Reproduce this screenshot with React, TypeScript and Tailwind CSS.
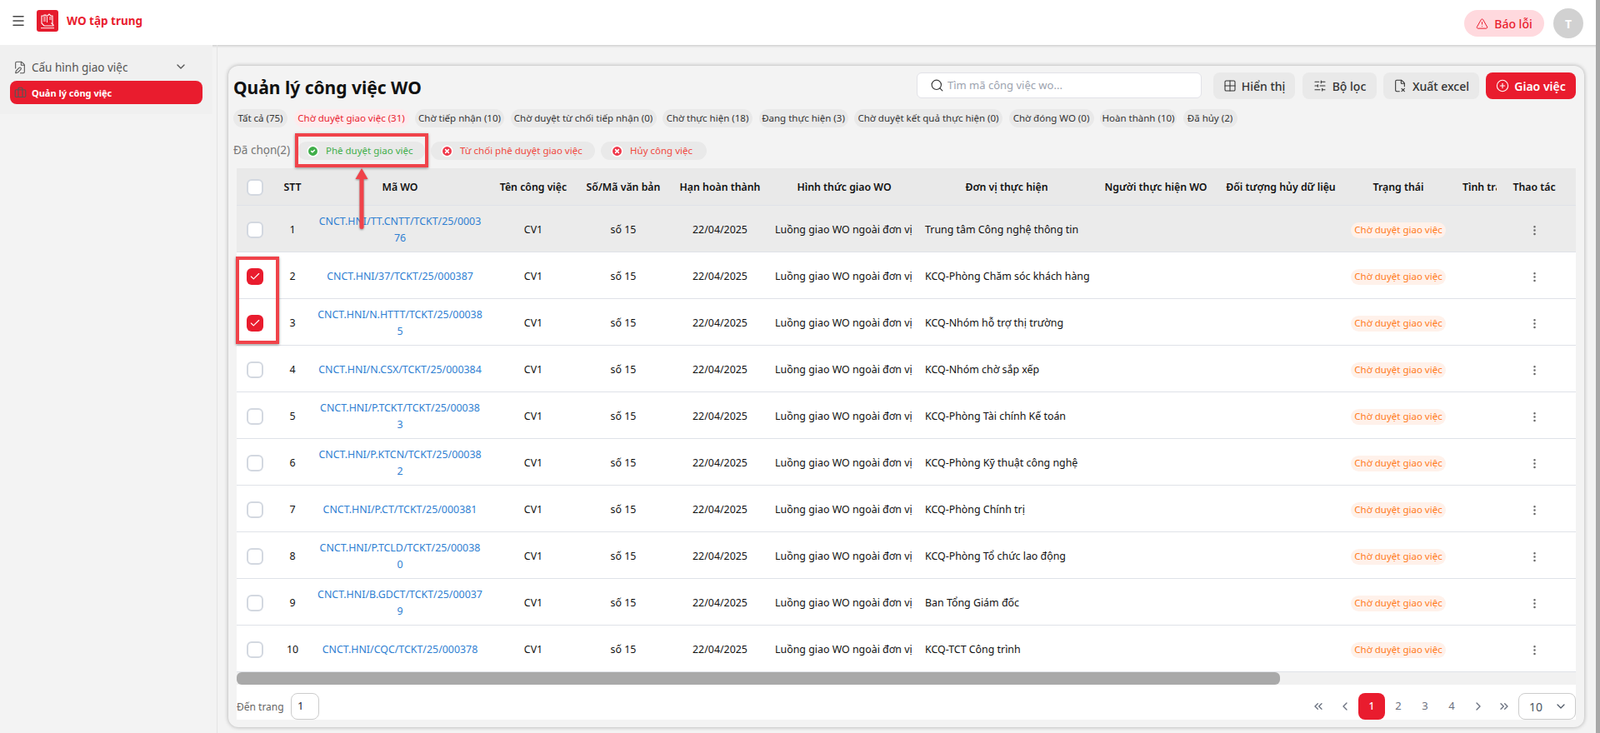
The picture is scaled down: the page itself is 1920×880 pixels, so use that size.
import { AlertTriangle, Briefcase, Check, ChevronDown, ChevronLeft, ChevronRight, ChevronsLeft, ChevronsRight, CircleCheck, CircleX, CirclePlus, EllipsisVertical, FileX2, FilePen, Grid2x2, Menu, Search, SlidersHorizontal } from "lucide-react";

const tabs: [string, string][] = [
  ["Tất cả (75)", "w-[65px]"], ["Chờ duyệt giao việc (31)", "w-[138px]"], ["Chờ tiếp nhận (10)", "w-[107px]"],
  ["Chờ duyệt từ chối tiếp nhận (0)", "w-[175px]"], ["Chờ thực hiện (18)", "w-[108px]"],
  ["Đang thực hiện (3)", "w-[107px]"], ["Chờ duyệt kết quả thực hiện (0)", "w-[178px]"], ["Chờ đóng WO (0)", "w-[102px]"],
  ["Hoàn thành (10)", "w-[92px]"], ["Đã hủy (2)", "w-[65px]"],
];

const rows: [string, string][] = [
  ["CNCT.HNI/TT.CNTT/TCKT/25/000376", "Trung tâm Công nghệ thông tin"],
  ["CNCT.HNI/37/TCKT/25/000387", "KCQ-Phòng Chăm sóc khách hàng"],
  ["CNCT.HNI/N.HTTT/TCKT/25/000385", "KCQ-Nhóm hỗ trợ thị trường"],
  ["CNCT.HNI/N.CSX/TCKT/25/000384", "KCQ-Nhóm chờ sắp xếp"],
  ["CNCT.HNI/P.TCKT/TCKT/25/000383", "KCQ-Phòng Tài chính Kế toán"],
  ["CNCT.HNI/P.KTCN/TCKT/25/000382", "KCQ-Phòng Kỹ thuật công nghệ"],
  ["CNCT.HNI/P.CT/TCKT/25/000381", "KCQ-Phòng Chính trị"],
  ["CNCT.HNI/P.TCLD/TCKT/25/000380", "KCQ-Phòng Tổ chức lao động"],
  ["CNCT.HNI/B.GDCT/TCKT/25/000379", "Ban Tổng Giám đốc"],
  ["CNCT.HNI/CQC/TCKT/25/000378", "KCQ-TCT Công trình"],
];

const gridCols = "grid grid-cols-[42px_48px_212px_108px_108px_124px_174px_206px_162px_138px_144px_46px_90px_5px]";

function Box({ checked }: { checked?: boolean }) {
  return checked ? (
    <span className="flex h-5 w-5 items-center justify-center rounded-md bg-[#e91c2e]">
      <Check size={14} strokeWidth={2} className="text-white" />
    </span>
  ) : (
    <span className="block h-5 w-5 rounded-md border-2 border-[#d3d8e0] bg-white" />
  );
}

export default function App() {
  return (
    <div className="relative h-[880px] w-[1920px] overflow-hidden bg-[#f3f3f3] font-['Inter',sans-serif] text-[12px] text-[#111]">
      <header className="absolute left-0 top-0 flex h-[54px] w-full items-center bg-white shadow-[0_1px_3px_rgba(0,0,0,0.2)]">
        <Menu size={18} strokeWidth={2} className="absolute left-[13px] top-[16px] text-[#444]" />
        <svg viewBox="0 0 26 26" className="absolute left-[44px] top-[12px] h-[26px] w-[26px]">
          <rect width="26" height="26" rx="3" fill="#e51b2d" />
          <path d="M6 7h3v-1h2v1h2l2-2 2 2h2v9h-1l2 2v1H9l-3-3z" fill="none" stroke="#fff" strokeWidth="1.1" />
          <path d="M8 9h3M8 11h3M8 13h3M15 9h3M15 11h3M12.5 8v7" stroke="#fff" strokeWidth="0.9" />
          <rect x="5" y="21" width="16" height="1.2" fill="#fff" opacity="0.8" />
        </svg>
        <span className="absolute left-[80px] top-[15px] text-[13.5px] font-bold leading-5 text-[#e91c2e]">WO tập trung</span>
        <div className="absolute left-[1757px] top-[12px] flex h-8 w-[96px] items-center justify-center gap-[7px] rounded-full bg-[#ffd9de] text-[14px] font-medium text-[#e91c2e]">
          <AlertTriangle size={15} strokeWidth={1.6} />
          <span>Báo lỗi</span>
        </div>
        <div className="absolute left-[1864px] top-[10px] flex h-9 w-9 items-center justify-center rounded-full bg-[#d1d1d1] text-[14px] font-bold text-white">T</div>
      </header>

      <div className="absolute bottom-0 right-0 top-0 z-20 w-[5px] bg-[#a8a8a8]" />

      <aside className="absolute left-0 top-[54px] h-[83px] w-[255px] bg-[#f0f0f0]">
        <FilePen size={16} strokeWidth={1.6} className="absolute left-[16px] top-[19px] text-[#555]" />
        <span className="absolute left-[38px] top-[17px] text-[13.5px] leading-5 text-[#555] [font-weight:450]">Cấu hình giao việc</span>
        <ChevronDown size={16} strokeWidth={2} className="absolute left-[209px] top-[18px] text-[#555]" />
        <div className="absolute left-[12px] top-[43px] flex h-7 w-[231px] items-center rounded-lg bg-[#e91c2e]">
          <Briefcase size={15} strokeWidth={1.8} className="absolute left-[5px] text-[#555]" />
          <span className="absolute left-[26px] top-[7px] text-[11px] font-bold leading-4 text-white">Quản lý công việc</span>
        </div>
      </aside>
      <div className="absolute bottom-0 left-[260px] top-[54px] w-px bg-[#e4e4e4]" />

      <main className="absolute left-[274px] top-[79px] h-[794px] w-[1627px] rounded-xl bg-[#f3f3f3] shadow-[0_0_5px_rgba(0,0,0,0.3)]">
        <h1 className="absolute left-[6px] top-[12px] text-[21px] font-bold leading-7 text-[#111]">Quản lý công việc WO</h1>

        <div className="absolute left-[826px] top-[8px] flex h-[31px] w-[342px] items-center rounded-md border border-[#e2e2e8] bg-white pl-[15px] text-[13px] text-[#9ca3af]">
          <Search size={17} strokeWidth={1.6} className="mr-[4px] text-[#333]" />
          <span>Tìm mã công việc wo...</span>
        </div>
        <div className="absolute left-[1182px] top-[8px] flex h-8 w-[98px] items-center justify-center gap-[6px] rounded-lg bg-[#e9e9e9] text-[14px] font-medium text-[#333]">
          <Grid2x2 size={16} strokeWidth={1.6} /><span>Hiển thị</span>
        </div>
        <div className="absolute left-[1289px] top-[8px] flex h-8 w-[89px] items-center justify-center gap-[7px] rounded-lg bg-[#e9e9e9] text-[14px] font-medium text-[#333]">
          <SlidersHorizontal size={16} strokeWidth={1.6} /><span>Bộ lọc</span>
        </div>
        <div className="absolute left-[1386px] top-[8px] flex h-8 w-[115px] items-center justify-center gap-[7px] rounded-lg bg-[#e9e9e9] text-[14px] font-medium text-[#333]">
          <FileX2 size={16} strokeWidth={1.6} /><span>Xuất excel</span>
        </div>
        <div className="absolute left-[1509px] top-[8px] flex h-8 w-[108px] items-center justify-center gap-[6px] rounded-lg bg-[#e91c2e] text-[14px] font-semibold text-white">
          <CirclePlus size={16} strokeWidth={1.6} /><span>Giao việc</span>
        </div>

        <div className="absolute left-[6px] top-[52px] flex gap-[7.5px]">
          {tabs.map(([t, w], i) => (
            <span key={t} className={`flex h-[22px] items-center justify-center whitespace-nowrap rounded-full text-[11.5px] ${w} ${i === 1 ? "bg-[#fdecee] text-[#e91c2e]" : "bg-[#e9e9e9] text-[#333]"}`}>{t}</span>
          ))}
        </div>

        <span className="absolute left-[6px] top-[91px] text-[13.5px] leading-5 text-[#777]">Đã chọn(2)</span>
        <div className="absolute left-[83px] top-[91px] flex h-[22px] w-[153px] items-center gap-[8px] rounded-full bg-[#e9e9e9] pl-[11px] text-[11.5px] text-[#3fae49]">
          <CircleCheck size={15} strokeWidth={2.5} className="fill-[#3fae49] text-white" /><span>Phê duyệt giao việc</span>
        </div>
        <div className="absolute left-[243px] top-[91px] flex h-[22px] w-[197px] items-center gap-[8px] rounded-full bg-[#e9e9e9] pl-[12px] text-[11.5px] text-[#f0483e]">
          <CircleX size={15} strokeWidth={2.5} className="fill-[#f0384a] text-white" /><span>Từ chối phê duyệt giao việc</span>
        </div>
        <div className="absolute left-[447px] top-[91px] flex h-[22px] w-[127px] items-center gap-[8px] rounded-full bg-[#e9e9e9] pl-[12px] text-[11.5px] text-[#f0483e]">
          <CircleX size={15} strokeWidth={2.5} className="fill-[#f0384a] text-white" /><span>Hủy công việc</span>
        </div>

        <div className="absolute left-[10px] top-[123px] w-[1607px]">
          <div className={`${gridCols} h-[45px] items-center border-b border-[#dfe2e8] bg-[#e9e9e9] pt-[2px] text-center text-[12.3px] font-semibold text-[#111]`}>
            <div className="flex justify-center pl-[2px]"><Box /></div>
            <div className="pl-[2px]">STT</div>
            <div>Mã WO</div>
            <div>Tên công việc</div>
            <div>Số/Mã văn bản</div>
            <div>Hạn hoàn thành</div>
            <div className="whitespace-nowrap">Hình thức giao WO</div>
            <div className="pl-[10px]">Đơn vị thực hiện</div>
            <div>Người thực hiện WO</div>
            <div className="whitespace-nowrap">Đối tượng hủy dữ liệu</div>
            <div>Trạng thái</div>
            <div className="overflow-hidden whitespace-nowrap pl-[5px] pr-[9px] text-left">Tình trạng</div>
            <div>Thao tác</div>
            <div />
          </div>
          {rows.map((r, i) => (
            <div key={r[0]} className={`${gridCols} h-[56px] items-center border-b border-[#dfe2e8] pt-[3px] text-center text-[12.4px] ${i === 0 ? "bg-[#ebebeb]" : "bg-white"}`}>
              <div className="flex justify-center pl-[2px]"><Box checked={i === 1 || i === 2} /></div>
              <div className="pl-[2px]">{i + 1}</div>
              <div className="break-all px-[7px] leading-5 text-[#2f80d2]">{r[0]}</div>
              <div>CV1</div>
              <div>số 15</div>
              <div>22/04/2025</div>
              <div className="whitespace-nowrap pl-[4px] text-left">Luồng giao WO ngoài đơn vị</div>
              <div className="whitespace-nowrap pl-[10px] text-left">{r[1]}</div>
              <div />
              <div />
              <div className="flex justify-center">
                <span className="flex h-[19px] w-[114px] items-center justify-center rounded-full bg-[#fff1ea] text-[11.5px] text-[#ff7a1a]">Chờ duyệt giao việc</span>
              </div>
              <div />
              <div className="flex justify-center"><EllipsisVertical size={15} className="text-[#666]" /></div>
              <div />
            </div>
          ))}
          <div className="h-[15px] bg-[#f1f1f1]">
            <div className="h-[15px] w-[1252px] rounded-md bg-[#a9a9a9]" />
          </div>
          <div className="relative h-[42px] bg-white">
            <span className="absolute left-0 top-[19px] text-[12px] leading-4 text-[#666]">Đến trang</span>
            <div className="absolute left-[65px] top-[10px] flex h-8 w-[34px] items-center rounded-lg border border-[#ccc] pl-[7px] text-[13px] text-[#1f2937]">1</div>
            <ChevronsLeft size={16} className="absolute left-[1290px] top-[18px] text-[#6b7280]" />
            <ChevronLeft size={16} className="absolute left-[1322px] top-[18px] text-[#6b7280]" />
            <span className="absolute left-[1346px] top-[10px] flex h-8 w-8 items-center justify-center rounded-lg bg-[#e91c2e] font-medium text-white">1</span>
            <span className="absolute left-[1378px] top-[10px] flex h-8 w-8 items-center justify-center text-[13px] text-[#6b7280]">2</span>
            <span className="absolute left-[1410px] top-[10px] flex h-8 w-8 items-center justify-center text-[13px] text-[#6b7280]">3</span>
            <span className="absolute left-[1442px] top-[10px] flex h-8 w-8 items-center justify-center text-[13px] text-[#6b7280]">4</span>
            <ChevronRight size={16} className="absolute left-[1482px] top-[18px] text-[#6b7280]" />
            <ChevronsRight size={16} className="absolute left-[1513px] top-[18px] text-[#6b7280]" />
            <div className="absolute left-[1538px] top-[10px] flex h-8 w-[69px] items-center justify-between rounded-lg border border-[#ccc] pl-[12px] pr-[9px] text-[14px] text-[#4b5563]">
              <span>10</span><ChevronDown size={16} strokeWidth={1.8} />
            </div>
          </div>
        </div>
      </main>

      <div className="absolute left-[354px] top-[160px] z-10 h-[41px] w-[160px] border-4 border-[#f0434a] shadow-[0_1px_3px_rgba(0,0,0,0.4)]" />
      <div className="absolute left-[283px] top-[308px] z-10 h-[105px] w-[52px] border-4 border-[#f0434a] shadow-[0_1px_3px_rgba(0,0,0,0.4)]" />
      <svg className="absolute left-[424px] top-[200px] z-10 h-[78px] w-[20px] overflow-visible drop-shadow-[0_1px_1px_rgba(0,0,0,0.4)]" viewBox="0 0 20 78">
        <path d="M10 2 L17.5 15 H12.5 V73 Q12.5 75 10 75 Q7.5 75 7.5 73 V15 H2.5 Z" fill="#f0434a" />
      </svg>
    </div>
  );
}
